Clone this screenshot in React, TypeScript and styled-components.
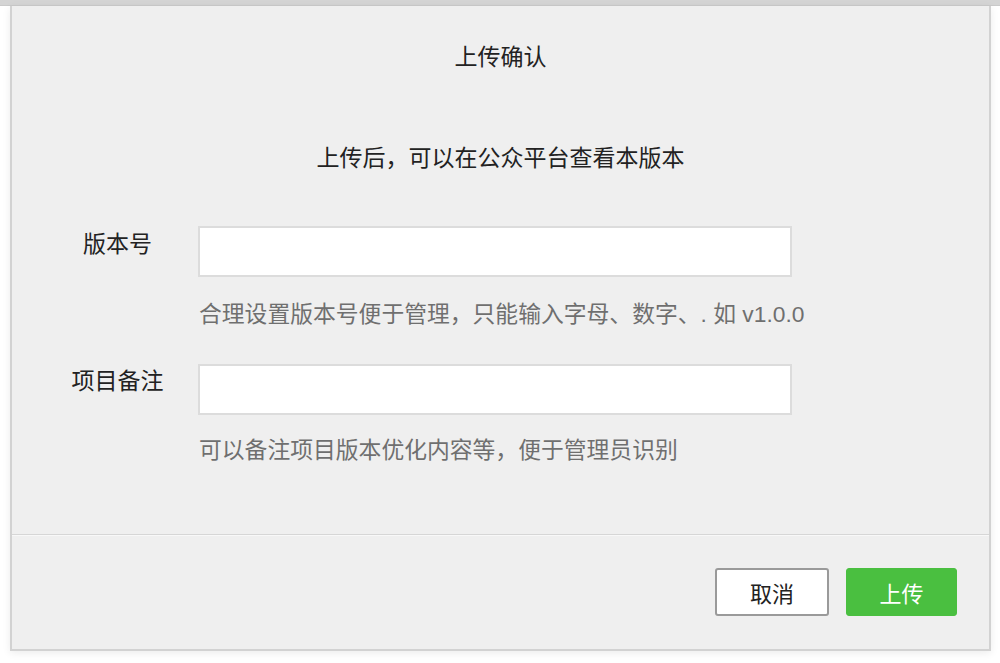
import React from 'react';
import styled, { createGlobalStyle } from 'styled-components';

const GlobalStyle = createGlobalStyle`
  html, body {
    margin: 0;
    padding: 0;
    background: #ffffff;
  }
  body {
    font-family: "Liberation Sans", "Noto Sans CJK SC", sans-serif;
    -webkit-font-smoothing: antialiased;
  }
`;

const Page = styled.div`
  width: 1000px;
  height: 663px;
  overflow: hidden;
  display: flex;
  flex-direction: column;
`;

const TopBar = styled.div`
  height: 5px;
  background: #d4d4d4;
  border-bottom: 1px solid #cacaca;
  flex-shrink: 0;
`;

const Dialog = styled.div`
  margin-left: 10px;
  width: 977px;
  height: 643px;
  background: #efefef;
  border: 2px solid #d2d2d2;
  border-top: none;
  box-shadow: 0 2px 8px rgba(0, 0, 0, 0.08);
  display: flex;
  flex-direction: column;
`;

const Body = styled.div`
  flex: 1;
  display: flex;
  flex-direction: column;
`;

const Title = styled.h2`
  margin: 36px 0 0;
  font-size: 23px;
  font-weight: 400;
  line-height: 30px;
  text-align: center;
  color: #222;
`;

const Subtitle = styled.p`
  margin: 71px 0 0;
  font-size: 23px;
  line-height: 30px;
  text-align: center;
  color: #222;
`;

const Row = styled.div<{ $top: number }>`
  display: flex;
  align-items: flex-start;
  gap: 10px;
  padding-left: 35px;
  margin-top: ${p => p.$top}px;
`;

const Label = styled.label<{ $offset: number }>`
  width: 141px;
  flex-shrink: 0;
  padding-top: ${p => p.$offset}px;
  font-size: 23px;
  line-height: 30px;
  text-align: center;
  color: #222;
`;

const Field = styled.div`
  display: flex;
  flex-direction: column;
`;

const Input = styled.input`
  box-sizing: border-box;
  width: 594px;
  height: 51px;
  border: 2px solid #dcdcdc;
  background: #fff;
  outline: none;
  padding: 0 12px;
  font-size: 20px;
  font-family: inherit;
`;

const Hint = styled.div<{ $top: number }>`
  margin-top: ${p => p.$top}px;
  padding-left: 1px;
  font-size: 22.8px;
  line-height: 30px;
  color: #6f6f6f;
  white-space: nowrap;
`;

const Divider = styled.div`
  height: 1px;
  background: #d6d6d6;
  border-bottom: 1px solid #f8f8f8;
`;

const Footer = styled.div`
  display: flex;
  justify-content: flex-end;
  gap: 17px;
  padding: 32px 32px 33px 0;
`;

const Button = styled.button<{ $primary?: boolean }>`
  box-sizing: border-box;
  height: 48px;
  width: ${p => (p.$primary ? 111 : 114)}px;
  border-radius: 3px;
  font-family: inherit;
  font-size: 22px;
  cursor: pointer;
  border: ${p => (p.$primary ? '1px solid #4abf40' : '2px solid #9a9a9a')};
  background: ${p => (p.$primary ? '#4abf40' : '#ffffff')};
  color: ${p => (p.$primary ? '#ffffff' : '#222222')};
`;

export default function App() {
  return (
    <>
      <GlobalStyle />
      <Page>
        <TopBar />
        <Dialog>
          <Body>
            <Title>上传确认</Title>
            <Subtitle>上传后，可以在公众平台查看本版本</Subtitle>
            <Row $top={53}>
              <Label $offset={3}>版本号</Label>
              <Field>
                <Input />
                <Hint $top={22}>合理设置版本号便于管理，只能输入字母、数字、. 如 v1.0.0</Hint>
              </Field>
            </Row>
            <Row $top={35}>
              <Label $offset={2}>项目备注</Label>
              <Field>
                <Input />
                <Hint $top={20}>可以备注项目版本优化内容等，便于管理员识别</Hint>
              </Field>
            </Row>
          </Body>
          <Divider />
          <Footer>
            <Button>取消</Button>
            <Button $primary>上传</Button>
          </Footer>
        </Dialog>
      </Page>
    </>
  );
}
